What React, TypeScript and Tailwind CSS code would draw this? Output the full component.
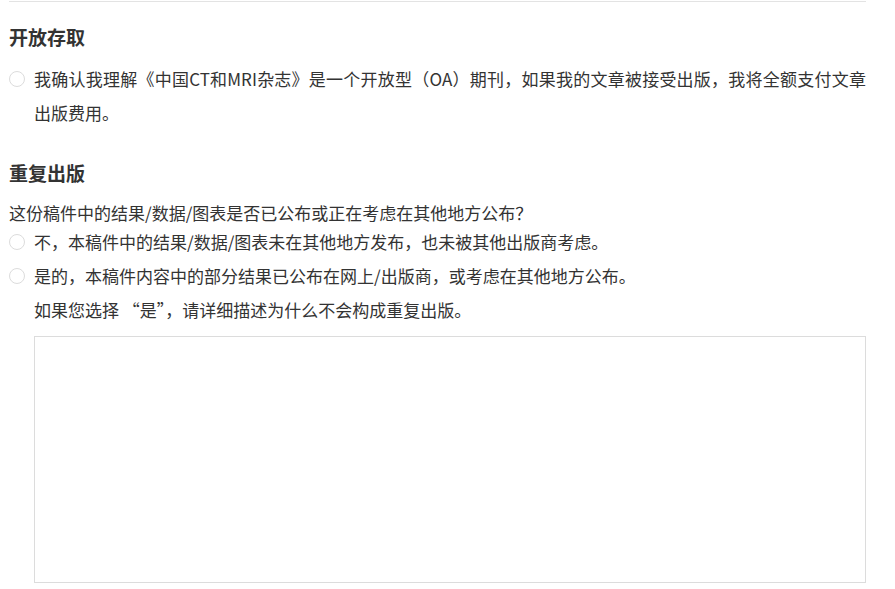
import React from 'react'

function Radio({ children }: { children: React.ReactNode }) {
  return (
    <label className="flex items-start">
      <span className="mt-[9px] h-4 w-4 shrink-0 rounded-full border border-[#dcdcdc] bg-white" />
      <span className="ml-[9px] flex-1 text-justify">{children}</span>
    </label>
  )
}

export default function App() {
  return (
    <div
      className="min-h-screen bg-white text-[17px] leading-[34px] text-[#333]"
      style={{ fontFamily: '"Noto Sans CJK SC", "Microsoft YaHei", sans-serif' }}
    >
      <div className="ml-[9px] w-[857px] pt-px">
        <div className="border-t border-[#e3e3e3]" />

        <h2 className="mt-[21px] text-[19px] font-bold leading-[28px]">开放存取</h2>
        <div className="mt-[11px]">
          <Radio>我确认我理解《中国CT和MRI杂志》是一个开放型（OA）期刊，如果我的文章被接受出版，我将全额支付文章出版费用。</Radio>
        </div>

        <h2 className="mt-[29px] text-[19px] font-bold leading-[28px]">重复出版</h2>
        <p className="mt-[14px] leading-[24px]">这份稿件中的结果/数据/图表是否已公布或正在考虑在其他地方公布？</p>
        <div className="flex flex-col">
          <Radio>不，本稿件中的结果/数据/图表未在其他地方发布，也未被其他出版商考虑。</Radio>
          <Radio>是的，本稿件内容中的部分结果已公布在网上/出版商，或考虑在其他地方公布。</Radio>
        </div>
        <div className="pl-[25px]">
          <p>如果您选择 “是”，请详细描述为什么不会构成重复出版。</p>
          <textarea className="mt-[9px] block h-[247px] w-full resize-none border border-[#dcdcdc] bg-white outline-none" />
        </div>
      </div>
    </div>
  )
}
